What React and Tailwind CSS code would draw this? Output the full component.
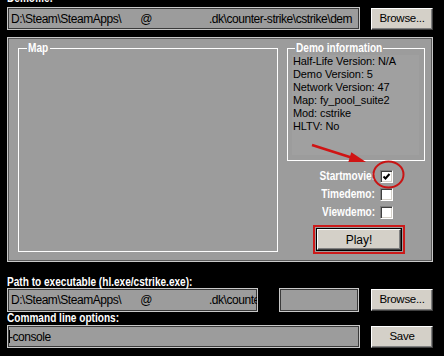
import React from "react";

const LBL = "inline-block text-[12px] leading-[13px] font-bold text-white whitespace-nowrap scale-x-[0.84]";

function L({ children, right = false, className = "" }) {
  return (
    <span className={LBL + (right ? " origin-right " : " origin-left ") + className}>{children}</span>
  );
}

function Field({ className = "", children }) {
  return (
    <div
      className={
        "flex items-center overflow-hidden whitespace-nowrap border border-[#c8c8c8] bg-[#9c9c9c] shadow-[inset_1px_1px_0_#3a3a3a,inset_-1px_-1px_0_#3a3a3a] text-[12px] text-black tracking-[-0.45px] " +
        className
      }
    >
      {children}
    </div>
  );
}

function Btn({ className = "", children }) {
  return (
    <div
      className={
        "flex items-center justify-center bg-[#d4d0c8] border border-t-white border-l-white border-r-[#404040] border-b-[#404040] shadow-[inset_-1px_-1px_0_#808080] text-[11.5px] text-black tracking-[-0.3px] " +
        className
      }
    >
      {children}
    </div>
  );
}

function Check({ label, checked }) {
  return (
    <div className="flex items-center justify-end h-[13px]">
      <div className="flex h-[13px] mr-[5px]">
        <L right>{label}</L>
      </div>
      <div className="shrink-0 w-[13px] h-[13px] bg-white border border-t-[#808080] border-l-[#808080] border-r-white border-b-white shadow-[inset_1px_1px_0_#404040,inset_-1px_-1px_0_#d4d0c8] flex items-center justify-center">
        {checked && (
          <svg width="11" height="11" viewBox="0 0 11 11">
            <path d="M2.5 5.5 L4.5 7.5 L8.5 3" stroke="#000" strokeWidth="2" fill="none" />
          </svg>
        )}
      </div>
    </div>
  );
}

function PathText() {
  return (
    <div className="pl-[3px] flex">
      <span>D:\Steam\SteamApps\</span>
      <span className="ml-[19px]">@</span>
      <span className="ml-[57px]">.dk\counter-strike\cstrike\dem</span>
    </div>
  );
}

export default function App() {
  return (
    <div className="relative w-[444px] h-[356px] overflow-hidden bg-black font-['Liberation_Sans',Arial,sans-serif]">
      <div className="flex h-[13px] pl-[7px] -mt-[8px]">
        <L>Demofile:</L>
      </div>

      <div className="flex items-start mt-[2px] pl-[7px]">
        <Field className="w-[353px] h-[23px]">
          <PathText />
        </Field>
        <Btn className="ml-[11px] mt-[1px] w-[62px] h-[22px]">Browse...</Btn>
      </div>

      <div className="ml-[7px] mt-[7px] w-[426px] h-[225px] border border-[#c8c8c8] bg-[#9c9c9c] shadow-[inset_1px_1px_0_#5a5a5a,inset_-1px_-1px_0_#5a5a5a] flex items-start">
        <fieldset className="ml-[10px] mt-[4px] w-[260px] h-[210px] border border-white">
          <legend className="flex h-[13px] ml-[8px] px-[1px] w-[23px]">
            <L>Map</L>
          </legend>
        </fieldset>

        <div className="ml-[9px] mt-[4px] w-[138px] flex flex-col">
          <fieldset className="h-[119px] border border-white">
            <legend className="flex h-[13px] ml-[7px] px-[1px] w-[88px]">
              <L>Demo information</L>
            </legend>
            <div className="ml-[4px] mr-[5px] h-[100px] bg-[#a0a0a0] pl-[1px] text-[11px] leading-[13px] text-black tracking-[-0.1px] whitespace-nowrap">
              <div>Half-Life Version: N/A</div>
              <div>Demo Version: 5</div>
              <div>Network Version: 47</div>
              <div>Map: fy_pool_suite2</div>
              <div>Mod: cstrike</div>
              <div>HLTV: No</div>
            </div>
          </fieldset>

          <div className="mt-[9px] flex flex-col gap-[5px] pr-[32px]">
            <Check label="Startmovie:" checked />
            <Check label="Timedemo:" />
            <Check label="Viewdemo:" />
          </div>

          <div className="mt-[6px] ml-[26px] w-[92px] h-[29px] border-2 border-[#cc1a1a] p-[1px]">
            <div className="w-full h-full border border-black">
              <Btn className="w-full h-full text-[12px] tracking-[0px]">Play!</Btn>
            </div>
          </div>
        </div>
      </div>

      <div className="flex h-[12px] mt-[14px] pl-[7px]">
        <L className="leading-[12px]">Path to executable (hl.exe/cstrike.exe):</L>
      </div>
      <div className="flex items-start pl-[7px]">
        <Field className="w-[251px] h-[24px]">
          <PathText />
        </Field>
        <div className="ml-[21px] w-[80px] h-[24px] border border-[#c8c8c8] bg-[#9c9c9c] shadow-[inset_1px_1px_0_#3a3a3a,inset_-1px_-1px_0_#3a3a3a]" />
        <Btn className="ml-[12px] mt-[1px] w-[62px] h-[22px]">Browse...</Btn>
      </div>

      <div className="flex h-[13px] pl-[7px]">
        <L>Command line options:</L>
      </div>
      <div className="flex items-start pl-[7px]">
        <Field className="w-[353px] h-[23px]">
          <div className="pl-[1px] flex items-center">
            <span className="inline-block w-[1px] h-[13px] bg-black" />
            <span className="-ml-[1px]">-console</span>
          </div>
        </Field>
        <Btn className="ml-[11px] mt-[1px] w-[62px] h-[22px]">Save</Btn>
      </div>

      <svg
        className="absolute left-0 top-0 pointer-events-none"
        width="444"
        height="356"
        viewBox="0 0 444 356"
      >
        <line x1="312" y1="145" x2="352" y2="157.8" stroke="#d01414" strokeWidth="2.5" />
        <polygon points="366,162 348.3,161.9 351.3,152.3" fill="#d01414" />
        <ellipse cx="388.5" cy="174.5" rx="15" ry="13" stroke="#c81414" strokeWidth="2" fill="none" />
      </svg>
    </div>
  );
}
